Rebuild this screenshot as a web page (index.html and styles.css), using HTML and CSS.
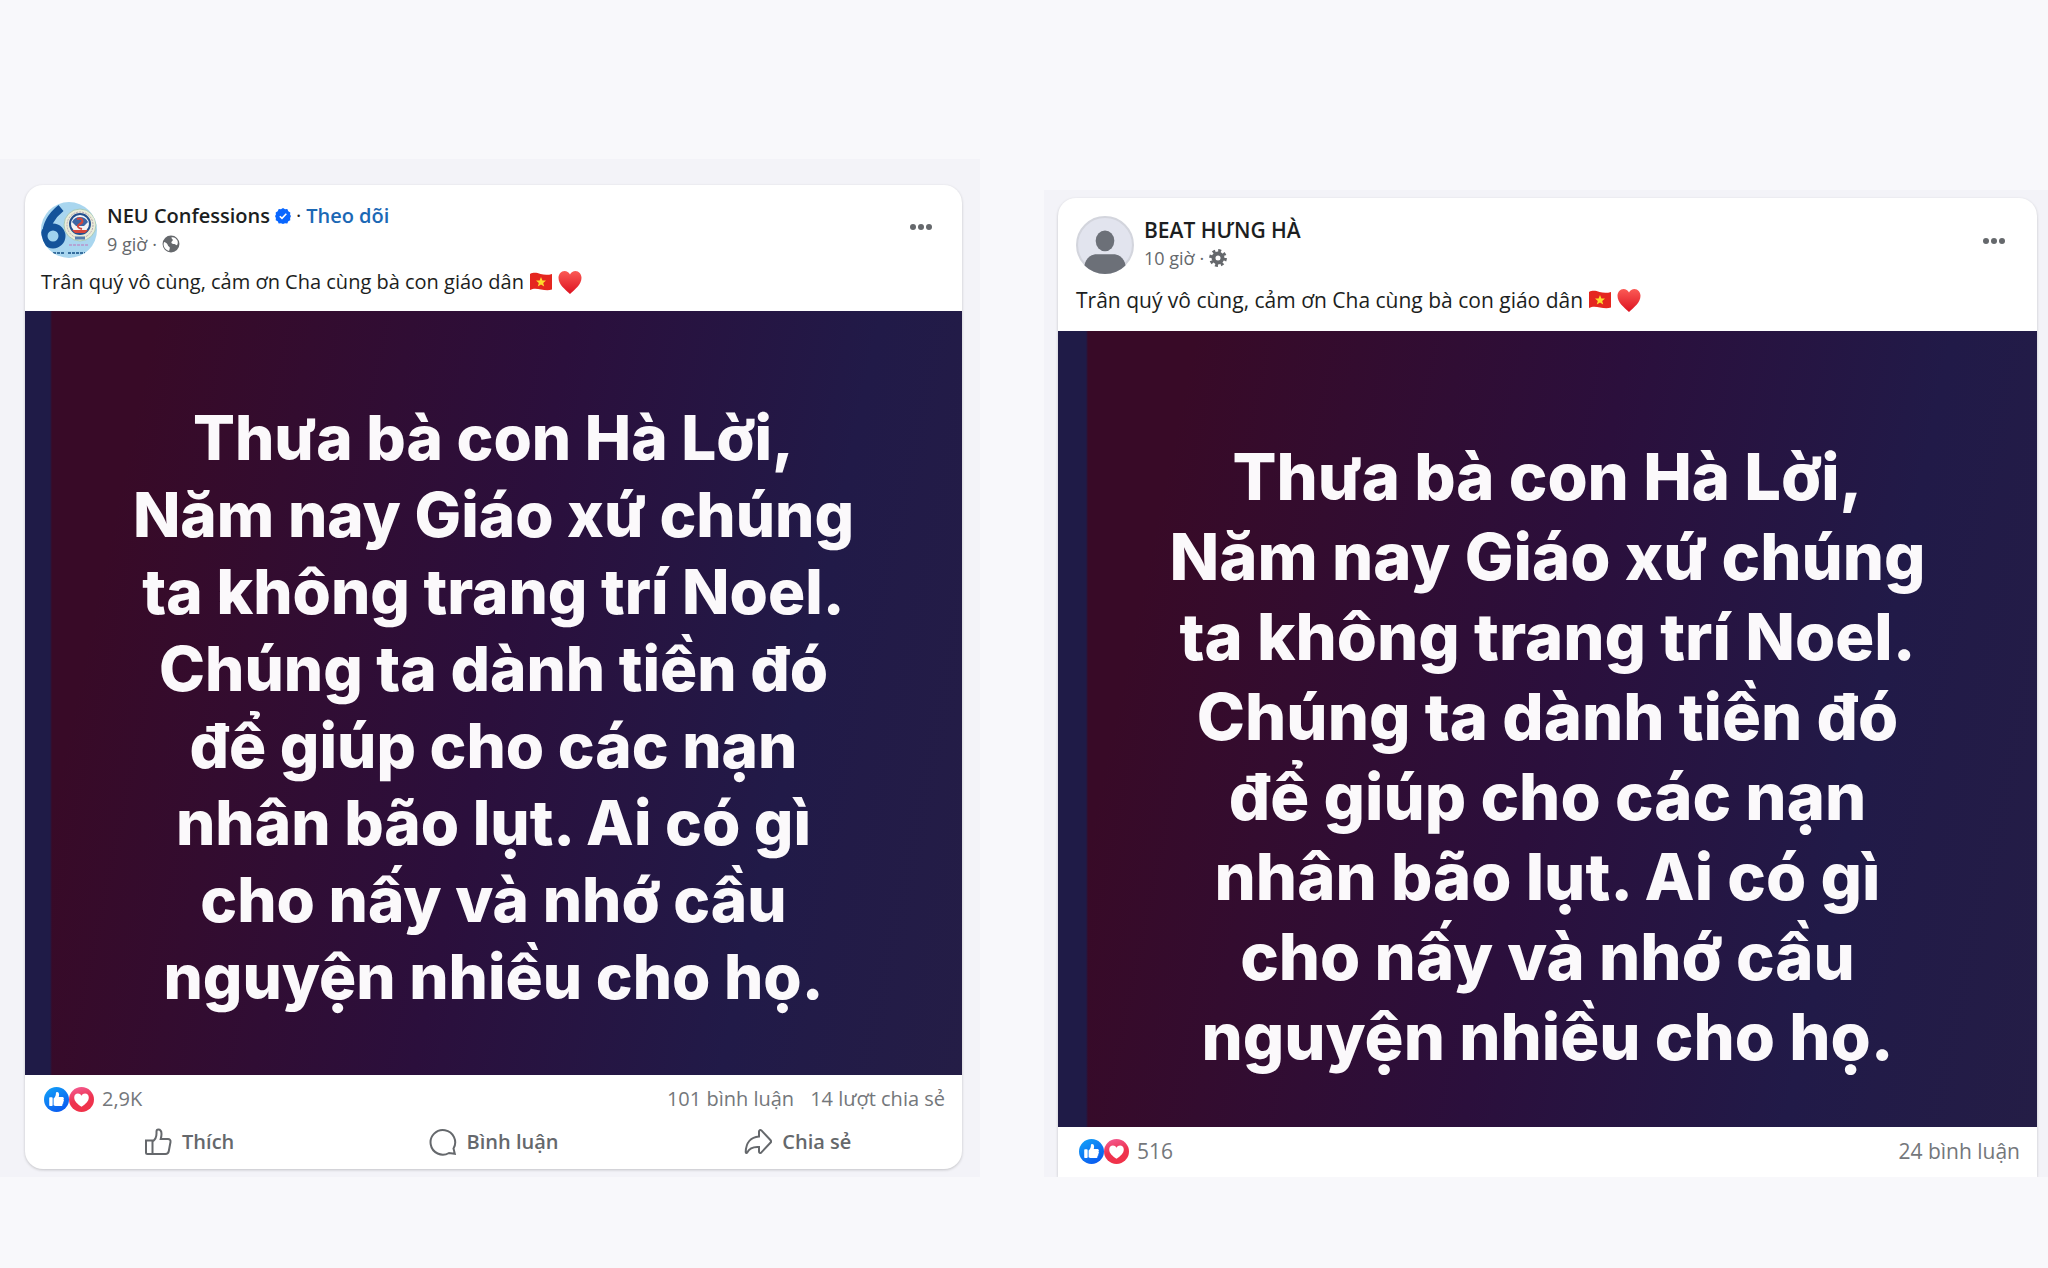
FILE: index.html
```html
<!DOCTYPE html>
<html lang="vi">

    <head>
        <meta charset="UTF-8">
        <meta name="viewport" content="width=device-width, initial-scale=1.0">
        <title>NEU Confessions - BEAT HƯNG HÀ</title>

        <link rel="stylesheet" href="styles.css">
    </head>

    <body>

        <!-- shared icons -->
        <svg class="defs" aria-hidden="true">
            <defs>
                <linearGradient id="likeFill" x1="0" y1="0" x2="0.6" y2="1">
                    <stop offset="0" stop-color="#12a4f8" />
                    <stop offset="1" stop-color="#0a5df0" />
                </linearGradient>
                <linearGradient id="loveFill" x1="0" y1="0" x2="0.3" y2="1">
                    <stop offset="0" stop-color="#f4609a" />
                    <stop offset="0.6" stop-color="#ee3350" />
                    <stop offset="1" stop-color="#f0324a" />
                </linearGradient>
                <linearGradient id="heartFill" x1="0" y1="0" x2="0" y2="1">
                    <stop offset="0" stop-color="#fb5a55" />
                    <stop offset="1" stop-color="#dd1220" />
                </linearGradient>
            </defs>
            <symbol id="like" viewBox="0 0 24 24">
                <circle cx="12" cy="12" r="12" fill="url(#likeFill)" />
                <path fill="#fff" d="M5 10.6c0-.4.3-.7.7-.7h1.9c.4 0 .7.3.7.7v6.9c0 .4-.3.7-.7.7H5.7a.7.7 0 0 1-.7-.7zM9.2 11c1.500-1.400 2.200-2.900 2.200-4.800 0-1 .4-1.500 1.200-1.500 1.300 0 1.900 1.300 1.900 2.700 0 .8-.2 1.500-.4 2.200h3.400c1 0 1.600.6 1.600 1.400 0 .5-.2.9-.5 1.100.4.300.5.700.5 1.100 0 .6-.3 1-.8 1.200.2.200.3.500.3.800 0 .6-.4 1.100-1 1.200.1.200.2.400.2.600 0 .8-.6 1.300-1.500 1.300h-3.100c-1.600 0-2.800-.2-4-.9z" />
            </symbol>
            <symbol id="love" viewBox="0 0 24 24">
                <circle cx="12" cy="12" r="12" fill="url(#loveFill)" />
                <path fill="#fff" d="M12 19c-4-2.700-7-5.300-7-8.900C5 7.900 6.600 6.300 8.600 6.300c1.400 0 2.700.7 3.400 2 .7-1.300 2-2 3.400-2 2 0 3.600 1.600 3.600 3.800 0 3.600-3 6.200-7 8.900z" />
            </symbol>
            <symbol id="flag" viewBox="0 0 24 24">
                <path fill="#e5261f" d="M1 4c4-2 7-1 10.500 0S19 5.200 23 4v15.500c-4 1.300-7.500.5-11 0S5 18 1 20z" />
                <path fill="#fddc2c" d="M12 7l1.400 3.400 3.600.2-2.800 2.300 1 3.600-3.200-2-3.200 2 1-3.600L7 10.600l3.600-.2z" />
            </symbol>
            <symbol id="heart" viewBox="0 0 24 24">
                <path fill="url(#heartFill)" d="M12 24C7 19.500.500 14.500.500 7.800.500 4 3.200 1 6.500 1c2.400 0 4.400 1.300 5.500 3.500C13.100 2.300 15.100 1 17.500 1c3.300 0 6 3 6 6.800C23.500 14.500 17 19.500 12 24z" />
            </symbol>
            <symbol id="dots" viewBox="0 0 24 24">
                <circle cx="4" cy="12" r="3" />
                <circle cx="12" cy="12" r="3" />
                <circle cx="20" cy="12" r="3" />
            </symbol>
        </svg>

        <main>
            <section class="panel">
                <article class="post">
                    <header class="post-header">
                        <svg class="avatar" viewBox="0 0 56 56" aria-hidden="true">
                            <clipPath id="round"><circle cx="28" cy="28" r="28" /></clipPath>
                            <g clip-path="url(#round)">
                                <rect width="56" height="56" fill="#a9d6ef" />
                                <path d="M20 6C10 14 5 24 5 34" fill="none" stroke="#14539a" stroke-width="8" />
                                <circle cx="12" cy="34" r="9" fill="#9fd3ee" stroke="#14539a" stroke-width="7" />
                                <circle cx="39" cy="23" r="16" fill="#e9edd8" stroke="#a8c9b8" stroke-width="1" />
                                <circle cx="39" cy="23" r="13" fill="none" stroke="#b9a3b4" stroke-width="1" stroke-dasharray="2 1" />
                                <circle cx="39" cy="22" r="10" fill="#f3f3f5" stroke="#24508f" stroke-width="2" />
                                <path d="M31 20a9 9 0 0 1 16 0l-4 4h-8z" fill="#3d66a5" />
                                <path d="M36 17c6-2 7 3 3 5s-2 4 2 5" fill="none" stroke="#d4473d" stroke-width="2" />
                                <path d="M31 28h16l-3 3H34z" fill="#d4473d" />
                                <path d="M34 36h10" stroke="#557eae" stroke-width="3" />
                                <path d="M28 43h20" stroke="#b4a5d4" stroke-width="2" stroke-dasharray="3 1" />
                                <path d="M12 51h12M27 51h17" stroke="#376f9f" stroke-width="2" stroke-dasharray="3 1" />
                            </g>
                        </svg>
                        <div class="author">
                            <div class="name-row">
                                <h2>NEU Confessions</h2>
                                <svg class="verified" viewBox="0 0 16 16" aria-hidden="true">
                                    <path fill="#0866ff" d="M8 0l2 1.200 2.300-.1 1 2.100 2 1.200-.2 2.300L16 8l-.9 2 .2 2.300-2 1-1 2.100-2.300-.2L8 16l-2-.8-2.300.2-1-2.100-2-1 .2-2.300L0 8l.9-1.300L.7 4.400l2-1.200 1-2.100L6 1.200z" />
                                    <path fill="none" stroke="#fff" stroke-width="1.600" d="M4.800 8.200l2.200 2.200 4.300-4.600" />
                                </svg>
                                <span>·</span>
                                <a href="#">Theo dõi</a>
                            </div>
                            <div class="meta">
                                <span>9 giờ</span>
                                <span>·</span>
                                <svg viewBox="0 0 16 16" aria-hidden="true">
                                    <circle cx="8" cy="8" r="7.500" fill="#65686c" />
                                    <path fill="#fff" d="M1.800 6.200c1.800.6 3.200 1.600 3.400 2.800.2 1 1.600 1 1.700 2.200.1 1.200-.4 2-.6 3C3.500 13.500 1.400 11 1.400 8zM8.500 2c2.400-.4 4.300 1 5.300 3.200.5 1.700.2 3-.5 4-1-.2-1.300-1-2.300-1.200C9.300 8 8 7.500 8.400 6.200c.3-.8 1.300-.9 1.200-1.800C9.500 3.500 8 3 8.500 2z" />
                                </svg>
                            </div>
                        </div>
                        <button class="more" aria-label="Xem thêm"><svg><use href="#dots" /></svg></button>
                    </header>
                    <p class="caption">Trân quý vô cùng, cảm ơn Cha cùng bà con giáo dân
                        <svg><use href="#flag" /></svg><svg><use href="#heart" /></svg></p>
                    <div class="photo">
                        <p>Thưa bà con Hà Lời,<br>Năm nay Giáo xứ chúng<br>ta không trang trí Noel.<br>Chúng ta dành tiền đó<br>để giúp cho các nạn<br>nhân bão lụt. Ai có gì<br>cho nấy và nhớ cầu<br>nguyện nhiều cho họ.</p>
                    </div>
                    <div class="stats">
                        <svg><use href="#like" /></svg>
                        <svg><use href="#love" /></svg>
                        <span class="total">2,9K</span>
                        <span>101 bình luận</span>
                        <span>14 lượt chia sẻ</span>
                    </div>
                    <div class="actions">
                        <button>
                            <svg viewBox="0 0 28 28" aria-hidden="true"><path d="M2 12.500h6.500V26H3.500A1.500 1.500 0 0 1 2 24.500zM8.500 13.500c3-2 4-4.500 4-8V3.500c0-1.200.7-2 1.800-2 2 0 3.200 2 3.200 4.500 0 1.500-.3 3.300-.8 5H24c1.700 0 2.800 1.300 2.500 3l-1.700 9c-.3 1.700-1.500 3-3.300 3h-13" /></svg>
                            Thích
                        </button>
                        <button>
                            <svg viewBox="0 0 28 28" aria-hidden="true"><path d="M24.500 20.500A12.300 12.300 0 1 0 20 25l5.800.8z" /></svg>
                            Bình luận
                        </button>
                        <button>
                            <svg viewBox="0 0 28 28" aria-hidden="true"><path d="M15 3.500c0-1.400 1.300-2 2.400-1.100l9 9.600c.8.900.8 2 0 2.800l-9 9.600c-1.100 1-2.400.4-2.400-1V19C9 18.500 5.500 20 3.200 24.500c-.5.900-1.500.6-1.500-.4C2 14.500 7 9 15 8.500z" /></svg>
                            Chia sẻ
                        </button>
                    </div>
                </article>
            </section>

            <section class="panel panel-right">
                <article class="post">
                    <header class="post-header">
                        <svg class="avatar" viewBox="0 0 56 56" aria-hidden="true">
                            <clipPath id="round2"><circle cx="28" cy="28" r="28" /></clipPath>
                            <circle cx="28" cy="28" r="27" fill="#e2e4ee" stroke="#d3d5dd" stroke-width="2" />
                            <g clip-path="url(#round2)" fill="#6c7078">
                                <ellipse cx="28" cy="24" rx="9" ry="10" />
                                <path d="M8 50c0-7 5-13 12-13h16c7 0 12 6 12 13v8H8z" />
                            </g>
                        </svg>
                        <div class="author">
                            <div class="name-row">
                                <h2>BEAT HƯNG HÀ</h2>
                            </div>
                            <div class="meta">
                                <span>10 giờ</span>
                                <span>·</span>
                                <svg viewBox="0 0 16 16" aria-hidden="true">
                                    <circle cx="8" cy="8" r="4" fill="none" stroke="#65686c" stroke-width="3.500" />
                                    <circle cx="8" cy="8" r="6.600" fill="none" stroke="#65686c" stroke-width="2.600" stroke-dasharray="2.600 2.580" />
                                </svg>
                            </div>
                        </div>
                        <button class="more" aria-label="Xem thêm"><svg><use href="#dots" /></svg></button>
                    </header>
                    <p class="caption">Trân quý vô cùng, cảm ơn Cha cùng bà con giáo dân
                        <svg><use href="#flag" /></svg><svg><use href="#heart" /></svg></p>
                    <div class="photo">
                        <p>Thưa bà con Hà Lời,<br>Năm nay Giáo xứ chúng<br>ta không trang trí Noel.<br>Chúng ta dành tiền đó<br>để giúp cho các nạn<br>nhân bão lụt. Ai có gì<br>cho nấy và nhớ cầu<br>nguyện nhiều cho họ.</p>
                    </div>
                    <div class="stats">
                        <svg><use href="#like" /></svg>
                        <svg><use href="#love" /></svg>
                        <span class="total">516</span>
                        <span>24 bình luận</span>
                    </div>
                </article>
            </section>
        </main>

    </body>

</html>
```

FILE: styles.css
```css
* {
    box-sizing: border-box;
}

body {
    font-family: "Open Sans", "Noto Sans", sans-serif;
    font-size: 20px;
    line-height: 28px;
    color: #1c1e21;
    background-color: #f8f8fb;
    margin: 0;
}

main {
    display: grid;
    grid-template-columns: 980fr 1004fr;
    gap: 64px;
    align-items: end;
    padding-top: 159px;
    padding-bottom: 91px;
}

h2, p {
    margin: 0;
}

button {
    font: inherit;
    color: inherit;
    background: none;
    border: none;
    padding: 0;
    cursor: pointer;
}

svg {
    display: block;
    flex-shrink: 0;
}

.defs {
    width: 0;
    height: 0;
}

.panel {
    background-color: #f3f3f8;
    padding: 26px 18px 8px 25px;
    overflow: hidden;
}

.post {
    background-color: #fff;
    border-radius: 18px;
    box-shadow: 0 1px 3px rgba(0, 0, 0, 0.2);
}

.post-header {
    display: flex;
    gap: 10px;
    padding: 17px 16px 0;
}

.avatar {
    width: 56px;
    height: 56px;
}

.author {
    flex: 1;
}

.name-row {
    display: flex;
    align-items: center;
    gap: 5px;
}

.name-row h2 {
    font-size: inherit;
    font-weight: 600;
}

.name-row a {
    color: #1b68b5;
    font-weight: 600;
    text-decoration: none;
}

.verified {
    width: 16px;
    height: 16px;
}

.meta {
    display: flex;
    align-items: center;
    gap: 5px;
    font-size: 18px;
    color: #65686c;
}

.meta svg {
    width: 18px;
    height: 18px;
}

.more {
    align-self: flex-start;
    padding: 13px;
}

.more svg {
    width: 24px;
    height: 24px;
    fill: #65686c;
}

.caption {
    display: flex;
    align-items: center;
    gap: 5px;
    padding: 10px 16px 15px;
}

.caption svg {
    width: 24px;
    height: 24px;
}

.photo {
    padding: 88px 0 60px;
    text-align: center;
    background: linear-gradient(90deg, #1f1b47 25px, transparent 27px), linear-gradient(102deg, #380a27 12%, #2b0f3c 50%, #211a48 78%, #241d46);
}

.photo p {
    font-family: Inter, sans-serif;
    font-size: 62px;
    font-weight: 800;
    line-height: 77px;
    color: #fbf9fb;
}

.stats {
    display: flex;
    align-items: center;
    padding: 10px 17px 12px 19px;
    color: #74777b;
}

.stats svg {
    width: 25px;
    height: 25px;
}

.stats span + span {
    margin-left: 16px;
}

.stats .total {
    margin-left: 8px;
    margin-right: auto;
}

.actions {
    display: flex;
    padding: 0 12px 10px;
}

.actions button {
    flex: 1;
    display: flex;
    align-items: center;
    justify-content: center;
    gap: 10px;
    height: 34px;
    color: #65686c;
    font-weight: 600;
}

.actions svg {
    width: 28px;
    height: 28px;
    fill: none;
    stroke: #65686c;
    stroke-width: 2;
}

/* the second post is larger and cut off at the bottom */
.panel-right {
    font-size: 21px;
    padding: 8px 11px 0 14px;
}

.panel-right .post {
    border-radius: 18px 18px 0 0;
}

.panel-right .post-header {
    padding: 18px 18px 0;
}

.panel-right .avatar {
    width: 58px;
    height: 58px;
}

.panel-right .caption {
    padding: 12px 18px 17px;
}

.panel-right .photo {
    padding: 106px 0 50px;
    background: linear-gradient(90deg, #1f1b47 28px, transparent 30px), linear-gradient(102deg, #380a27 12%, #2b0f3c 50%, #211a48 78%, #241d46);
}

.panel-right .photo p {
    font-size: 65px;
    line-height: 80px;
}

.panel-right .stats {
    padding-left: 21px;
}
```
